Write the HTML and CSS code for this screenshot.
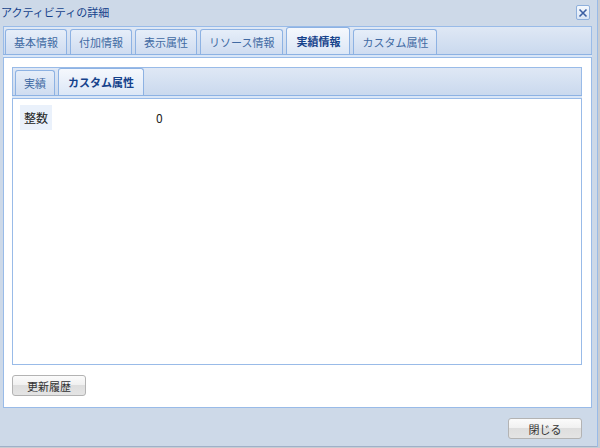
FILE: index.html
```html
<!DOCTYPE html>
<html lang="ja">
<head>
    <meta charset="UTF-8">
    <title>アクティビティの詳細</title>
    <link rel="stylesheet" href="styles.css">
</head>
<body>
    <div class="window">
        <div class="titlebar">
            <span class="title">アクティビティの詳細</span>
            <span class="close-btn">
                <svg width="10" height="10" viewBox="0 0 10 10">
                    <path d="M1.5 1.5 L8.5 8.5 M8.5 1.5 L1.5 8.5" stroke="#3c5fa3" stroke-width="1.6" fill="none"/>
                </svg>
            </span>
        </div>

        <div class="tabpanel outer">
            <div class="strip">
                <span class="tab">基本情報</span>
                <span class="tab">付加情報</span>
                <span class="tab">表示属性</span>
                <span class="tab">リソース情報</span>
                <span class="tab active">実績情報</span>
                <span class="tab">カスタム属性</span>
            </div>
            <div class="spacer"></div>
            <div class="panel-body outer-body">

                <div class="tabpanel inner">
                    <div class="strip">
                        <span class="tab">実績</span>
                        <span class="tab active">カスタム属性</span>
                    </div>
                    <div class="spacer"></div>
                    <div class="panel-body inner-body">
                        <div class="attr-row">
                            <span class="attr-label">整数</span>
                            <span class="attr-value">0</span>
                        </div>
                    </div>
                </div>

                <div class="btn-row">
                    <span class="btn">更新履歴</span>
                </div>
            </div>
        </div>

        <div class="footer">
            <span class="btn">閉じる</span>
        </div>
    </div>
</body>
</html>
```

FILE: styles.css
```css
html { background: #c9ccd1; }
body {
    margin: 0;
    font-family: "Noto Sans CJK JP", "Noto Sans", sans-serif;
    font-size: 11px;
}

.window {
    box-sizing: border-box;
    width: 598px;
    height: 447px;
    background: #cdd9e8;
    border-right: 1px solid #99bbe8;
    display: flex;
    flex-direction: column;
}

.titlebar {
    height: 26px;
    display: flex;
    align-items: center;
    justify-content: space-between;
    padding: 0 7px 0 1px;
}
.title { color: #15428b; font-size: 11px; line-height: 1; margin-top: -2px; }
.close-btn {
    box-sizing: border-box;
    width: 14px;
    height: 15px;
    margin-top: -1px;
    border: 1px solid #8fb0dc;
    border-radius: 2px;
    background: linear-gradient(#f4f8fd, #d9e5f5);
    display: flex;
    align-items: center;
    justify-content: center;
}

/* tab panels */
.tabpanel { display: flex; flex-direction: column; }
.tabpanel.outer { flex: 1; margin: 0 5px 0 3px; }

.strip {
    height: 27px;
    border: 1px solid #99bbe8;
    border-bottom: none;
    background: linear-gradient(#dfe8f5, #cad9ee);
    display: flex;
    align-items: flex-end;
    gap: 3px;
    padding-left: 1px;
}
.tab {
    box-sizing: border-box;
    height: 25px;
    padding: 0 8px;
    border: 1px solid #8db2e3;
    border-bottom: none;
    border-radius: 3px 3px 0 0;
    background: linear-gradient(#e6eef9, #cfdcf0);
    color: #416aa3;
    display: flex;
    align-items: center;
    white-space: nowrap;
}
.tab.active {
    height: 27px;
    padding: 0 9px;
    background: linear-gradient(#f5f8fd, #dce7f6);
    color: #15428b;
    font-weight: bold;
}

.spacer {
    height: 2px;
    border-top: 1px solid #8db2e3;
    background: #d9e6f7;
}

.panel-body {
    flex: 1;
    background: #fff;
    border: 1px solid #99bbe8;
    display: flex;
    flex-direction: column;
}
.outer-body { padding: 9px 9px 11px 8px; }

.tabpanel.inner { flex: 1; }
.tabpanel.inner .strip { padding-left: 2px; }
.inner-body { padding: 6px 7px; }

.attr-row {
    display: grid;
    grid-template-columns: 136px 1fr;
    align-items: center;
}
.attr-label {
    justify-self: start;
    background: #eaf1fb;
    color: #222;
    font-size: 12px;
    padding: 0 4px;
    line-height: 25px;
}
.attr-value { color: #222; font-size: 12px; margin-top: -1px; }

/* buttons */
.btn-row { margin-top: 10px; display: flex; }
.btn {
    box-sizing: border-box;
    width: 74px;
    height: 21px;
    border: 1px solid #b3b3b3;
    border-radius: 3px;
    background: linear-gradient(#fbfbfb 0%, #f1f1f1 45%, #dedede 50%, #e4e4e4 100%);
    color: #333;
    display: flex;
    align-items: center;
    justify-content: center;
}

.footer {
    height: 39px;
    display: flex;
    justify-content: flex-end;
    padding: 10px 15px 0 0;
    box-sizing: border-box;
    border-bottom: 1px solid #9fb1c9;
}
```
